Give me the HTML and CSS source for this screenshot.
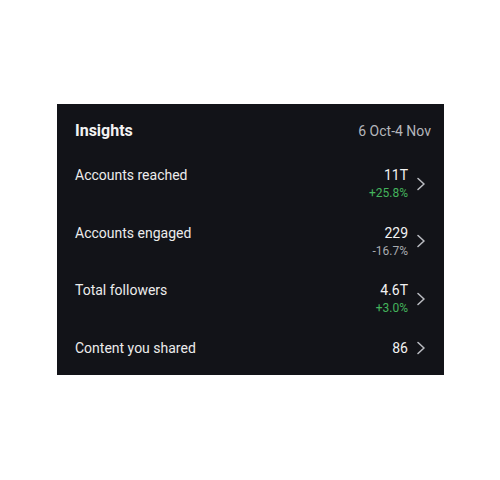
FILE: index.html
```html
<!DOCTYPE html>
<html lang="en">
<head>
    <meta charset="UTF-8">
    <meta name="viewport" content="width=device-width, initial-scale=1.0">
    <title>Insights</title>
    <link rel="stylesheet" href="styles.css">
</head>
<body>

<div class="insights">
    <div class="head">
        <span class="title">Insights</span>
        <span class="range">6 Oct-4 Nov</span>
    </div>

    <div class="row">
        <span class="label">Accounts reached</span>
        <div class="side">
            <div class="nums">
                <div class="value">11T</div>
                <div class="pct up">+25.8%</div>
            </div>
            <svg class="chev" viewBox="0 0 10 14"><polyline points="2,1.5 8,7 2,12.5"/></svg>
        </div>
    </div>

    <div class="row">
        <span class="label">Accounts engaged</span>
        <div class="side">
            <div class="nums">
                <div class="value">229</div>
                <div class="pct down">-16.7%</div>
            </div>
            <svg class="chev" viewBox="0 0 10 14"><polyline points="2,1.5 8,7 2,12.5"/></svg>
        </div>
    </div>

    <div class="row">
        <span class="label">Total followers</span>
        <div class="side">
            <div class="nums">
                <div class="value">4.6T</div>
                <div class="pct up">+3.0%</div>
            </div>
            <svg class="chev" viewBox="0 0 10 14"><polyline points="2,1.5 8,7 2,12.5"/></svg>
        </div>
    </div>

    <div class="row">
        <span class="label">Content you shared</span>
        <div class="side">
            <div class="nums">
                <div class="value">86</div>
            </div>
            <svg class="chev" viewBox="0 0 10 14"><polyline points="2,1.5 8,7 2,12.5"/></svg>
        </div>
    </div>
</div>

</body>
</html>
```

FILE: styles.css
```css
body {
    margin: 0;
    background-color: #fff;
    font-family: Roboto, "Liberation Sans", sans-serif;
}
.insights {
    box-sizing: border-box;
    width: 387px;
    height: 271px;
    margin: 104px 0 0 57px;
    padding-top: 17px;
    background-color: #121318;
    color: #f2f2f2;
    overflow: hidden;
}
.head {
    display: flex;
    justify-content: space-between;
    align-items: baseline;
    height: 20px;
    padding: 0 13px 0 18px;
    margin-bottom: 22px;
}
.title {
    font-size: 16px;
    line-height: 20px;
    font-weight: 700;
}
.range {
    font-size: 14px;
    line-height: 20px;
    color: #b4b6bb;
}
.row {
    box-sizing: border-box;
    display: flex;
    justify-content: space-between;
    align-items: flex-start;
    height: 57.5px;
    padding: 4px 18px 0 18px;
}
.label {
    font-size: 14px;
    line-height: 17px;
    color: #ececec;
}
.side {
    display: flex;
    align-items: center;
    gap: 8px;
}
.nums {
    text-align: right;
}
.value {
    font-size: 14px;
    line-height: 17px;
}
.pct {
    font-size: 12px;
    line-height: 14px;
    margin-top: 2px;
}
.up {
    color: #44b35c;
}
.down {
    color: #a9abb0;
}
.chev {
    width: 10px;
    height: 14px;
    fill: none;
    stroke: #b9bbc0;
    stroke-width: 1.6;
    stroke-linecap: round;
    stroke-linejoin: round;
}
```
